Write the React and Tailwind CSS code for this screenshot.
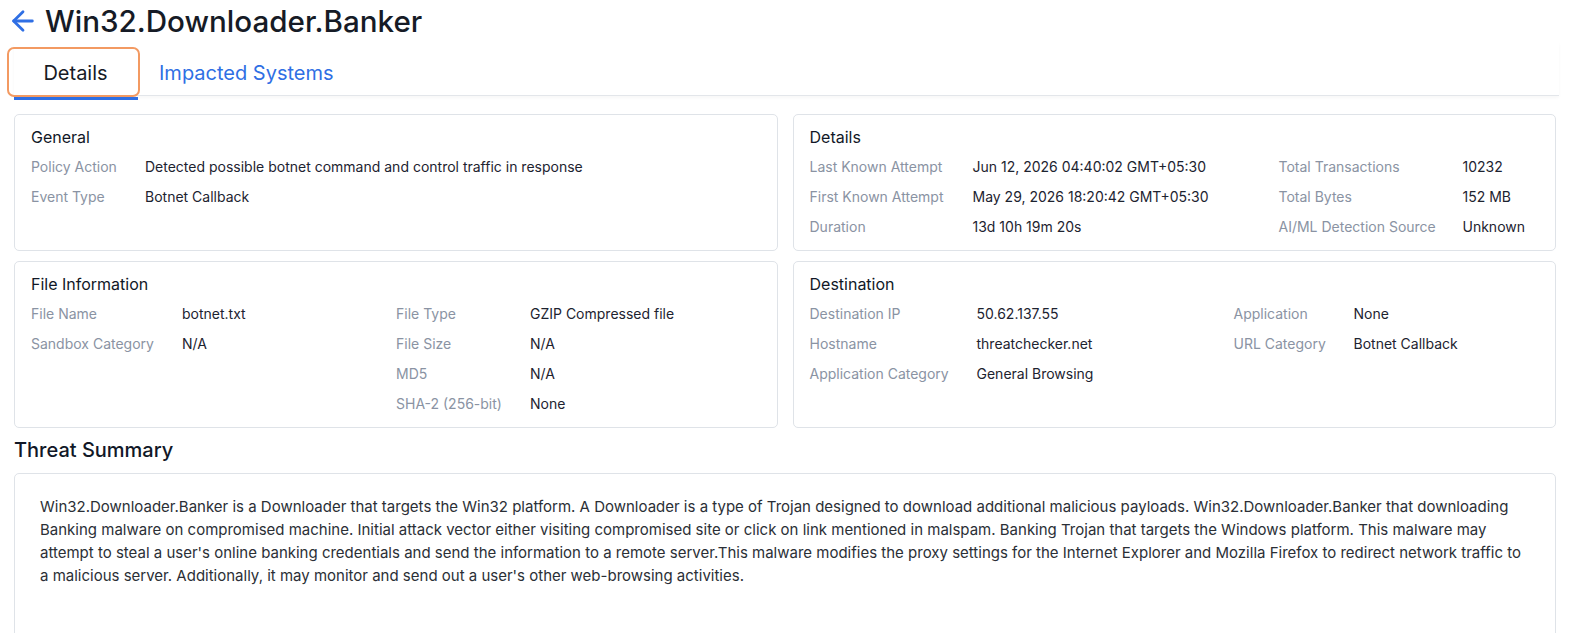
import React from "react";
import { ArrowLeft } from "lucide-react";

const Row = ({ cols }) => (
  <div className="flex h-[30px] items-center text-[14px]">
    {cols.map(([w, text, kind], i) => (
      <div
        key={i}
        style={{ width: w }}
        className={`shrink-0 whitespace-nowrap ${kind === "l" ? "text-[#8a93a3]" : "text-[#1d2330]"}`}
      >
        {text}
      </div>
    ))}
  </div>
);

const Card = ({ title, rows }) => (
  <div className="rounded-[5px] border border-[#dfe3e8] bg-white px-4 pt-[10px] pb-[9px]">
    <div className="text-[16px] leading-6 text-[#111827]">{title}</div>
    <div className="mt-[2px]">
      {rows.map((r, i) => (
        <Row key={i} cols={r} />
      ))}
    </div>
  </div>
);

const App = () => {
  return (
    <div className="min-h-[633px] bg-white px-[14px] font-['Inter',sans-serif] text-[#111827]">
      <div className="flex h-[42px] items-center gap-[6px]">
        <ArrowLeft className="ml-[-7px] h-[32px] w-[32px] text-[#2f6fe4]" strokeWidth={2.1} />
        <h1 className="text-[29.6px] leading-9 font-medium text-[#161b26]">Win32.Downloader.Banker</h1>
      </div>

      <div className="mr-[-3px] flex h-[54px] items-start border-b border-[#e3e6ea] pt-[5px] shadow-[0_2px_3px_rgba(0,0,0,0.03)]">
        <div className="relative ml-[-7px] flex h-[50px] w-[133px] shrink-0 items-center justify-center rounded-[7px] border-2 border-[#f39a62] text-[20px] text-[#161b26]">
          <span className="pl-[4px] pt-[2px]">Details</span>
          <div className="absolute bottom-[-5px] left-[5px] h-[3px] w-[124px] bg-[#2f6fe4]" />
        </div>
        <div className="flex h-[50px] items-center pl-[19px] pt-[2px] text-[20px] text-[#2f6fe4]">Impacted Systems</div>
      </div>

      <div className="mt-[18px] grid grid-cols-2 gap-x-[15px] gap-y-[10px]">
        <Card
          title="General"
          rows={[
            [[114, "Policy Action", "l"], [600, "Detected possible botnet command and control traffic in response", "v"]],
            [[114, "Event Type", "l"], [600, "Botnet Callback", "v"]],
          ]}
        />
        <Card
          title="Details"
          rows={[
            [[163, "Last Known Attempt", "l"], [306, "Jun 12, 2026 04:40:02 GMT+05:30", "v"], [184, "Total Transactions", "l"], [80, "10232", "v"]],
            [[163, "First Known Attempt", "l"], [306, "May 29, 2026 18:20:42 GMT+05:30", "v"], [184, "Total Bytes", "l"], [80, "152 MB", "v"]],
            [[163, "Duration", "l"], [306, "13d 10h 19m 20s", "v"], [184, "AI/ML Detection Source", "l"], [80, "Unknown", "v"]],
          ]}
        />
        <Card
          title="File Information"
          rows={[
            [[151, "File Name", "l"], [214, "botnet.txt", "v"], [134, "File Type", "l"], [200, "GZIP Compressed file", "v"]],
            [[151, "Sandbox Category", "l"], [214, "N/A", "v"], [134, "File Size", "l"], [200, "N/A", "v"]],
            [[151, "", "l"], [214, "", "v"], [134, "MD5", "l"], [200, "N/A", "v"]],
            [[151, "", "l"], [214, "", "v"], [134, "SHA-2 (256-bit)", "l"], [200, "None", "v"]],
          ]}
        />
        <Card
          title="Destination"
          rows={[
            [[167, "Destination IP", "l"], [257, "50.62.137.55", "v"], [120, "Application", "l"], [150, "None", "v"]],
            [[167, "Hostname", "l"], [257, "threatchecker.net", "v"], [120, "URL Category", "l"], [150, "Botnet Callback", "v"]],
            [[167, "Application Category", "l"], [257, "General Browsing", "v"]],
          ]}
        />
      </div>

      <h2 className="mt-[8px] text-[20px] leading-7 font-medium text-[#111827]">Threat Summary</h2>
      <div className="mt-[9px] h-[200px] rounded-[5px] border border-[#dfe3e8] px-[25px] pt-[21px] text-[15px] leading-[23px] text-[#2b2f36]">
        Win32.Downloader.Banker is a Downloader that targets the Win32 platform. A Downloader is a type of Trojan designed to download additional malicious payloads. Win32.Downloader.Banker that downloading Banking malware on compromised machine. Initial attack vector either visiting compromised site or click on link mentioned in malspam. Banking Trojan that targets the Windows platform. This malware may attempt to steal a user's online banking credentials and send the information to a remote server.This malware modifies the proxy settings for the Internet Explorer and Mozilla Firefox to redirect network traffic to a malicious server. Additionally, it may monitor and send out a user's other web-browsing activities.
      </div>
    </div>
  );
};

export default App;
